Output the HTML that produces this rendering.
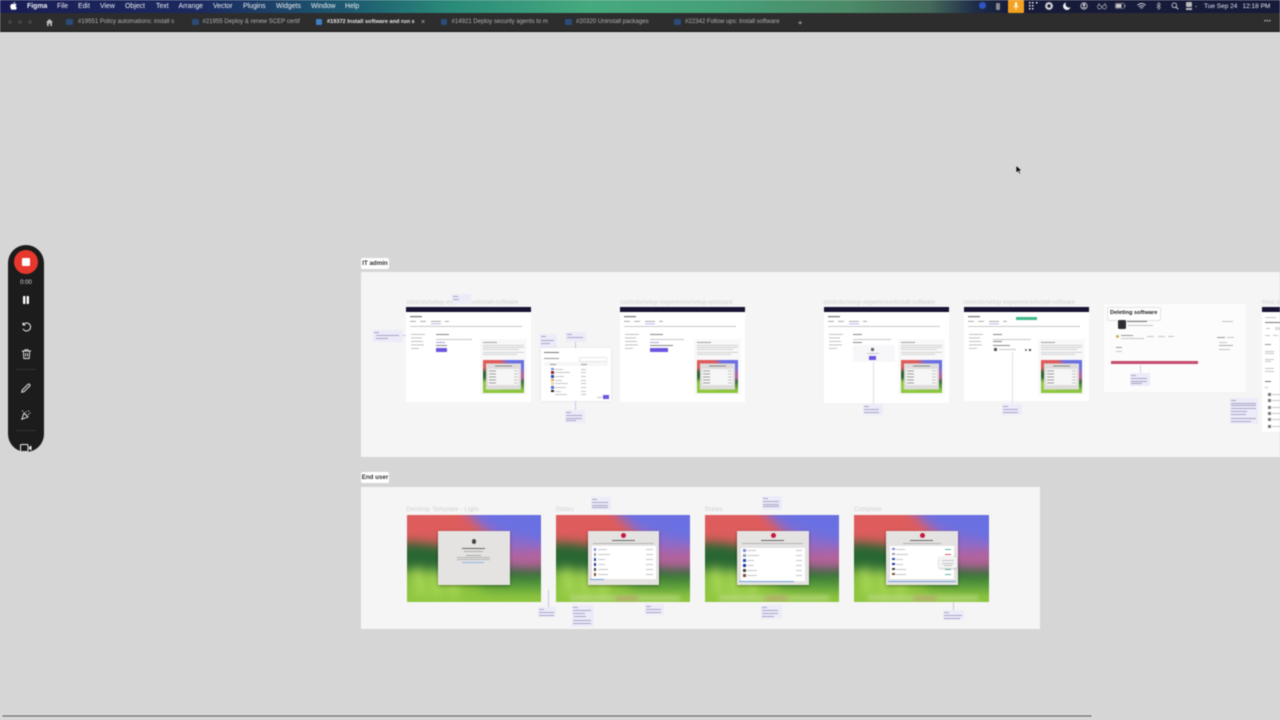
<!DOCTYPE html>
<html><head><meta charset="utf-8"><title>Figma</title>
<style>
html,body{margin:0;padding:0;width:1280px;height:720px;overflow:hidden;background:#d6d6d6;font-family:"Liberation Sans",sans-serif}
div,span,svg{position:absolute;display:block}
#all{left:0;top:0;width:1280px;height:720px;background:#d6d6d6;filter:blur(.45px);overflow:hidden}
.t{white-space:nowrap}
#menu{left:0;top:0;width:1280px;height:12.5px;background:linear-gradient(90deg,#1a1d55 0,#1b2a60 200px,#1d5a70 350px,#2a8a7a 450px,#46aa7e 590px,#45a078 720px,#4c8a68 850px,#44685a 930px,#1f2c48 975px,#171b3a 1010px,#171b3a 1280px)}
.m{top:3.1px;font-size:6.9px;line-height:8px;color:#eef0f4;white-space:nowrap;font-weight:400}
#tabs{left:0;top:12.5px;width:1280px;height:18.5px;background:#2d2d2d;border-bottom:1px solid #161616}
.tb{top:6.8px;font-size:6.05px;line-height:7px;color:#b0b2b5;white-space:nowrap}
.ic{top:6px;width:6.5px;height:6.5px;background:#2b4b78;border-radius:1px}
.lb{background:#fff;border-radius:2px;font-size:6.2px;line-height:11px;color:#333;font-weight:700;text-align:center}
.fr{background:#f5f5f5}
.h{font-size:6px;line-height:8px;color:#d0d0d0;white-space:nowrap;letter-spacing:.03px}
.card{background:#fff;width:125px;height:95px}
.bar{height:1px;background:#c6c6cc}
.hd{left:0;top:0;height:5px;width:125px;background:#191233}
.note{background:#ecebf8}
.note .bar{background:#a6a6c8;height:.8px}
.dlg{background:#e4e3e2;box-shadow:0 1px 3px rgba(0,0,0,.35)}
.row{background:#fff}
.wp{overflow:hidden;width:134.5px;height:87.5px;top:514.5px;background:#7db53a}
.ws{left:-20px;top:-20px;width:174.5px;height:127.5px;filter:blur(5.2px)}
.mw{left:77px;top:52.5px;width:41px;height:33px;overflow:hidden;background:#7db53a}
.ms{left:-6.1px;top:-7.5px;width:53.2px;height:48px;filter:blur(1.7px)}
.dock{left:14px;top:80px;width:110px;height:6px;background:#d9e6b0;opacity:.4;filter:blur(2.2px)}
.dock2{left:60px;top:81px;width:22px;height:5px;background:#b8956a;opacity:.6;filter:blur(2.2px)}
</style></head><body>
<svg width="0" height="0" style="left:0;top:0"><defs>
<g id="wps">
<rect x="-20" y="-20" width="175" height="128" fill="#84bc3c"/>
<rect x="-20" y="-20" width="175" height="70" fill="#6a70e2"/>
<path d="M45-20C65 0 90 25 155 28V55H70Z" fill="#8f6ac8"/>
<path d="M-20-20H46C62 4 84 24 110 42L90 48L-20 30Z" fill="#de5c5c"/>
<path d="M70 30C95 38 118 38 155 32V58H95Z" fill="#b4629a"/>
<path d="M-20 28C15 26 45 30 68 42C90 54 118 58 155 52V66H70C35 56 10 54-20 56Z" fill="#286632"/>
<path d="M60 58C95 64 125 64 155 62V78H80Z" fill="#55983a"/>
<path d="M-20 72C30 70 80 78 155 76V110H-20Z" fill="#8ec63f"/>
<path d="M6 54l5 26h7l-3-28zM24 54l3 28h7l-3-28zM42 58l2 24h7l-2-24z" fill="#b6e060"/>
</g>
<symbol id="mi" viewBox="0 0 41 33">
<rect x="3" y="3.500" width="35" height="26" fill="#dedcdb"/>
<rect x="5" y="9" width="31" height="16" fill="#f6f6f6"/>
<g fill="#888"><rect x="12" y="5.500" width="17" height="1"/><rect x="6" y="10.500" width="7" height=".8"/><rect x="6" y="13.500" width="7" height=".8"/><rect x="6" y="16.500" width="7" height=".8"/><rect x="6" y="19.500" width="7" height=".8"/><rect x="6" y="22.500" width="7" height=".8"/></g>
<g fill="#bbb"><rect x="31" y="10.500" width="4" height=".8"/><rect x="31" y="13.500" width="4" height=".8"/><rect x="31" y="16.500" width="4" height=".8"/><rect x="31" y="19.500" width="4" height=".8"/><rect x="31" y="22.500" width="4" height=".8"/></g>
</symbol>
<symbol id="cnt" viewBox="0 0 125 95">
<rect width="125" height="5" fill="#191233"/>
<g fill="#999"><rect x="4" y="9" width="12" height="1.200" fill="#777"/><rect x="4" y="14" width="6" height=".8"/><rect x="14" y="14" width="6" height=".8"/><rect x="25" y="14" width="10" height=".8"/><rect x="39" y="14" width="4" height=".8"/></g>
<rect x="25" y="16.500" width="10" height=".6" fill="#9a8fe0"/>
<rect x="4" y="19" width="112" height=".8" fill="#bbb"/>
<g fill="#b4b4b4"><rect x="5" y="27" width="14" height=".8"/><rect x="5" y="30.500" width="11" height=".8"/><rect x="5" y="34" width="12" height=".8"/><rect x="5" y="37.500" width="13" height=".8"/><rect x="5" y="41" width="8" height=".8"/></g>
<rect x="74" y="32" width="47" height="56" fill="#f8f8f8"/>
<g fill="#c0c0c0"><rect x="77" y="35" width="14" height=".9" fill="#999"/><rect x="77" y="38" width="41" height=".7"/><rect x="77" y="40" width="41" height=".7"/><rect x="77" y="42" width="36" height=".7"/><rect x="77" y="45" width="41" height=".7"/><rect x="77" y="47" width="34" height=".7"/></g>
</symbol>
</defs></svg>
<div id="all">

<!-- menu bar -->
<div id="menu">
<svg style="left:10px;top:2px" width="7" height="8" viewBox="0 0 14 16"><path fill="#fff" d="M10 0c.2 1.500-1.200 3.300-3 3.200C6.800 1.700 8.300.1 10 0zM7.100 4.200c.9 0 1.800-.7 3.200-.7 1 0 2.300.5 3 1.600-2.600 1.500-2.200 5.200.5 6.300-.7 1.800-2.200 4.400-3.700 4.400-1 0-1.500-.7-2.800-.7s-1.800.7-2.800.7C2.700 15.800.5 11.800.5 8.700c0-3 1.900-5 4-5 1.100 0 2 .5 2.600.5z"/></svg>
<div class="m" style="left:27px;font-weight:700">Figma</div>
<div class="m" style="left:57px">File</div>
<div class="m" style="left:78px">Edit</div>
<div class="m" style="left:100px">View</div>
<div class="m" style="left:125px">Object</div>
<div class="m" style="left:156px">Text</div>
<div class="m" style="left:178.500px">Arrange</div>
<div class="m" style="left:213px">Vector</div>
<div class="m" style="left:243px">Plugins</div>
<div class="m" style="left:276px">Widgets</div>
<div class="m" style="left:311px">Window</div>
<div class="m" style="left:345px">Help</div>
<div style="left:979px;top:2px;width:7px;height:7px;border-radius:50%;background:#2f55c8"></div>
<div style="left:996px;top:2.500px;width:3.500px;height:7px;background:#8a8d90;border-radius:1px"></div>
<div style="left:1008px;top:0;width:15.500px;height:12.500px;background:#f4a11f;border-radius:1px"></div>
<svg style="left:1012px;top:2px" width="8" height="9" viewBox="0 0 8 9"><rect x="3" y="0" width="2" height="5" rx="1" fill="#fff"/><path d="M1.800 3.500a2.200 2.200 0 004.400 0M4 6v2" stroke="#fff" stroke-width=".7" fill="none"/></svg>
<svg style="left:1029px;top:2px" width="9" height="8" viewBox="0 0 9 8" fill="#eee"><rect x="0" y="0" width="1.500" height="1.500"/><rect x="3" y="0" width="1.500" height="1.500"/><rect x="7" y="0" width="1.500" height="1.500"/><rect x="0" y="3" width="1.500" height="1.500"/><rect x="3" y="3" width="1.500" height="1.500"/><rect x="0" y="6" width="1.500" height="1.500"/><rect x="3" y="6" width="1.500" height="1.500"/></svg>
<svg style="left:1045px;top:2px" width="8" height="8" viewBox="0 0 8 8"><circle cx="4" cy="4" r="2.600" fill="none" stroke="#ddd" stroke-width="1.800"/><circle cx="4" cy="4" r="3.700" fill="none" stroke="#ddd" stroke-width=".8" stroke-dasharray="1 1"/></svg>
<svg style="left:1063px;top:2px" width="8" height="8" viewBox="0 0 8 8"><path d="M3 .5a3.800 3.800 0 104.500 4.800A3.500 3.500 0 013 .5z" fill="#eee"/></svg>
<svg style="left:1080px;top:2px" width="8" height="8" viewBox="0 0 8 8"><circle cx="4" cy="4" r="3.200" fill="none" stroke="#ddd" stroke-width=".8"/><circle cx="4" cy="3" r="1.300" fill="#ddd"/><path d="M1.800 6a2.500 2 0 014.400 0z" fill="#ddd"/></svg>
<svg style="left:1097px;top:2px" width="10" height="8" viewBox="0 0 10 8"><circle cx="2.500" cy="5" r="2" fill="none" stroke="#bbb" stroke-width=".7"/><circle cx="7.500" cy="5" r="2" fill="none" stroke="#bbb" stroke-width=".7"/><path d="M4.500 5h1M1 3l1.500-2M9 3L7.500 1" stroke="#bbb" stroke-width=".6"/></svg>
<svg style="left:1115px;top:3px" width="11" height="6" viewBox="0 0 11 6"><rect x=".3" y=".3" width="9" height="5.200" rx="1.200" fill="none" stroke="#999" stroke-width=".6"/><rect x="1" y="1" width="5.500" height="3.800" fill="#ccc"/><rect x="9.800" y="2" width=".8" height="2" fill="#999"/></svg>
<svg style="left:1137px;top:2.500px" width="9" height="7" viewBox="0 0 9 7"><path d="M.5 2.300a5.500 5.500 0 018 0M2 3.800a3.500 3.500 0 015 0M3.300 5.200a1.600 1.600 0 012.400 0" fill="none" stroke="#eee" stroke-width=".8"/></svg>
<svg style="left:1156px;top:2px" width="5" height="8" viewBox="0 0 5 8"><path d="M.5 2l4 3.500L2.500 7.500V.5l2 2-4 3.500" fill="none" stroke="#bbb" stroke-width=".6"/></svg>
<svg style="left:1171px;top:2px" width="8" height="8" viewBox="0 0 8 8"><circle cx="3.300" cy="3.300" r="2.300" fill="none" stroke="#ddd" stroke-width=".8"/><path d="M5 5l2.300 2.300" stroke="#ddd" stroke-width=".9"/></svg>
<div style="left:1186px;top:2px;width:6px;height:5px;background:#bbb;border-radius:1px"></div>
<div style="left:1186px;top:8px;width:6px;height:1.500px;background:#bbb"></div>
<div style="left:1195px;top:5.500px;width:1.500px;height:1.500px;background:#888;border-radius:50%"></div>
<div class="m" style="left:1204px;color:#e4e6ec;font-size:6.500px;top:2.500px">Tue Sep 24</div>
<div class="m" style="left:1242.500px;color:#e4e6ec;font-size:6.500px;top:2.500px">12:18 PM</div>
</div>

<!-- tab bar -->
<div id="tabs">
<div style="left:8px;top:7.500px;width:4px;height:4px;border-radius:50%;background:#444"></div>
<div style="left:18px;top:7.500px;width:4px;height:4px;border-radius:50%;background:#444"></div>
<div style="left:28px;top:7.500px;width:4px;height:4px;border-radius:50%;background:#444"></div>
<svg style="left:45.500px;top:6px" width="7" height="7" viewBox="0 0 7 7"><path d="M3.500 0L7 3.200H6V7H4.300V4.500H2.700V7H1V3.200H0z" fill="#bdbdbd"/></svg>
<div class="ic" style="left:66px"></div><div class="tb" style="left:78px">#19551 Policy automations: install s</div>
<div class="ic" style="left:192px"></div><div class="tb" style="left:202.500px">#21955 Deploy &amp; renew SCEP certif</div>
<div class="ic" style="left:315.500px;background:#3f7fc8"></div><div class="tb" style="left:327px;color:#e8e8e8;font-weight:700;font-size:5.600px;width:90px;overflow:hidden">#19372 Install software and run s</div>
<div class="tb" style="left:421px;color:#bbb;font-size:7px">×</div>
<div class="ic" style="left:440.500px"></div><div class="tb" style="left:451.500px">#14921 Deploy security agents to m</div>
<div class="ic" style="left:565px"></div><div class="tb" style="left:576px">#20320 Uninstall packages</div>
<div class="ic" style="left:674px"></div><div class="tb" style="left:685px">#22342 Follow ups: Install software</div>
<div class="tb" style="left:798px;color:#ccc;font-size:7.500px">+</div>
<div class="tb" style="left:1264px;color:#aaa;font-size:6px;letter-spacing:.3px">•••</div>
</div>

<!-- cursor -->
<svg style="left:1014.500px;top:165px" width="8" height="10" viewBox="0 0 8 10"><path d="M1 .5v7.500l2-1.800 1.400 3 1.200-.6-1.300-2.900H7z" fill="#111" stroke="#fff" stroke-width=".5"/></svg>

<!-- record toolbar -->
<div style="left:8px;top:245px;width:36px;height:207px;background:#1c1c1c;border-radius:18px;overflow:hidden">
<div style="left:6px;top:5px;width:24px;height:24px;border-radius:50%;background:#e8382e"></div>
<div style="left:14px;top:13px;width:8px;height:8px;background:#fff;border-radius:1px"></div>
<div class="t" style="left:0;width:36px;top:34px;text-align:center;font-size:6px;line-height:8px;color:#ddd">0:00</div>
<svg style="left:14px;top:51px" width="8" height="8" viewBox="0 0 8 8"><rect x="1" y="0" width="2.400" height="8" rx=".5" fill="#fff"/><rect x="4.600" y="0" width="2.400" height="8" rx=".5" fill="#fff"/></svg>
<svg style="left:13px;top:76px" width="10" height="11" viewBox="0 0 10 11"><path d="M2 1.500V4h2.500M2.200 3.800A4 4 0 112 7.800" fill="none" stroke="#e8e8e8" stroke-width="1"/></svg>
<svg style="left:13.500px;top:104px" width="9" height="10" viewBox="0 0 9 10"><path d="M0 2h9M3 2V.7h3V2M1.300 2l.5 7.500h5.400L7.700 2M3.500 4v3.500M5.500 4v3.500" fill="none" stroke="#e8e8e8" stroke-width=".9"/></svg>
<div style="left:8px;top:124px;width:20px;height:1px;background:#333"></div>
<svg style="left:13px;top:138px" width="10" height="10" viewBox="0 0 10 10"><path d="M.8 9.200L1.300 7 7 1.300a1 1 0 011.500 0l.2.200a1 1 0 010 1.500L3 8.700z" fill="none" stroke="#eee" stroke-width="1"/></svg>
<svg style="left:13px;top:165px" width="10" height="10" viewBox="0 0 10 10"><path d="M.8 9.200L3 3l4 4zM5 1.500v1M7 1h1M8.500 3h1M7 4.500h1M1 1h1" fill="none" stroke="#eee" stroke-width=".9"/></svg>
<div style="left:8px;top:185px;width:20px;height:1px;background:#333"></div>
<svg style="left:12px;top:199px" width="12" height="8" viewBox="0 0 12 8"><rect x=".5" y=".5" width="7.500" height="7" rx="1" fill="none" stroke="#eee" stroke-width="1"/><path d="M9 3l2.500-1.500v5L9 5z" fill="#eee"/></svg>
</div>

<!-- IT admin section -->
<div class="lb" style="left:361px;top:257.500px;width:28px;height:11px">IT admin</div>
<div class="fr" style="left:361px;top:272px;width:919px;height:185px"></div>

<div class="h" style="left:406.500px;top:298.500px">controls/setup-experience/install-software</div>
<div class="card" style="left:406px;top:307px"><svg width="125" height="95" style="left:0;top:0"><use href="#cnt"/></svg>
<div class="mw"><svg class="ms" viewBox="-20 -20 175 128" preserveAspectRatio="none"><use href="#wps"/></svg><svg style="left:0;top:0" width="41" height="33"><use href="#mi"/></svg></div>
<div class="bar" style="left:30px;top:27px;width:13px;background:#888"></div>
<div class="bar" style="left:30px;top:31.500px;width:36px"></div>
<div class="bar" style="left:30px;top:35px;width:9px;background:#a5a5e0"></div>
<div class="bar" style="left:30px;top:38px;width:11px;background:#888"></div>
<div style="left:30px;top:41px;width:11px;height:3.500px;background:#6a55e0;border-radius:.5px"></div>
</div>
<div class="h" style="left:620.500px;top:298.500px">controls/setup-experience/setup-assistant</div>
<div class="card" style="left:620px;top:307px"><svg width="125" height="95" style="left:0;top:0"><use href="#cnt"/></svg>
<div class="mw"><svg class="ms" viewBox="-20 -20 175 128" preserveAspectRatio="none"><use href="#wps"/></svg><svg style="left:0;top:0" width="41" height="33"><use href="#mi"/></svg></div>
<div class="bar" style="left:30px;top:27px;width:13px;background:#888"></div>
<div class="bar" style="left:30px;top:31.500px;width:34px"></div>
<div class="bar" style="left:30px;top:35px;width:9px;background:#a5a5e0"></div>
<div class="bar" style="left:30px;top:38px;width:23px;background:#888"></div>
<div style="left:30px;top:41px;width:18px;height:3.500px;background:#6a55e0;border-radius:.5px"></div>
</div>

<div class="note" style="left:373px;top:330px;width:29px;height:12px"><div class="bar" style="left:1px;top:2px;width:5px"></div><div class="bar" style="left:3px;top:5px;width:23px"></div><div class="bar" style="left:3px;top:8px;width:12px"></div></div>
<div class="bar" style="left:402px;top:335px;width:4px;background:#c9c9e6"></div>
<div class="note" style="left:452px;top:294px;width:19px;height:10px"><div class="bar" style="left:1px;top:2px;width:5px"></div><div class="bar" style="left:1px;top:5px;width:6px"></div></div>
<div class="note" style="left:540px;top:334px;width:17px;height:15px"><div class="bar" style="left:1px;top:2px;width:5px"></div><div class="bar" style="left:1px;top:6px;width:13px"></div><div class="bar" style="left:1px;top:9px;width:9px"></div></div>
<div class="note" style="left:566px;top:332px;width:20px;height:10px"><div class="bar" style="left:1px;top:2px;width:5px"></div><div class="bar" style="left:1px;top:5px;width:16px"></div></div>
<div class="bar" style="left:575px;top:342px;width:.8px;height:6px;background:#c9c9e6"></div>

<div style="left:541px;top:348px;width:70px;height:53px;background:#fff;box-shadow:0 0 3px rgba(0,0,0,.08);overflow:hidden">
<div class="bar" style="left:3px;top:4px;width:15px;background:#777"></div>
<div class="bar" style="left:3px;top:10px;width:15px;background:#999"></div>
<div style="left:38px;top:9px;width:26px;height:3px;border:.5px solid #e6e6e6"></div>
<div style="left:3px;top:14px;width:64px;height:4px;background:#f6f6f6"></div>
<div class="bar" style="left:9px;top:15.500px;width:6px;background:#999"></div><div class="bar" style="left:40px;top:15.500px;width:6px;background:#999"></div>
<div style="left:10px;top:19.500px;width:2.500px;height:2.500px;background:#7d8ae0"></div><div class="bar" style="left:14px;top:20.500px;width:8px"></div><div class="bar" style="left:40px;top:20.500px;width:5px"></div>
<div style="left:10px;top:23px;width:2.500px;height:2.500px;background:#8c2a2a"></div><div class="bar" style="left:14px;top:24px;width:15px"></div><div class="bar" style="left:40px;top:24px;width:5px"></div>
<div style="left:10px;top:27px;width:2.500px;height:2.500px;background:#2a4ab0"></div><div class="bar" style="left:14px;top:28px;width:9px"></div><div class="bar" style="left:40px;top:28px;width:5px"></div>
<div style="left:10px;top:30.500px;width:2.500px;height:2.500px;background:#e0a040"></div><div class="bar" style="left:14px;top:31.500px;width:7px"></div><div class="bar" style="left:40px;top:31.500px;width:5px"></div>
<div style="left:10px;top:34px;width:2.500px;height:2.500px;background:#e8d8a0"></div><div class="bar" style="left:14px;top:35px;width:13px"></div><div class="bar" style="left:40px;top:35px;width:5px"></div>
<div style="left:10px;top:38px;width:2.500px;height:2.500px;background:#5a6ad0"></div><div class="bar" style="left:14px;top:39px;width:11px"></div><div class="bar" style="left:40px;top:39px;width:5px"></div>
<div style="left:10px;top:41.500px;width:2.500px;height:2.500px;background:#222"></div><div class="bar" style="left:14px;top:42.500px;width:6px"></div><div class="bar" style="left:40px;top:42.500px;width:5px"></div>
<div class="bar" style="left:14px;top:46px;width:12px"></div><div class="bar" style="left:40px;top:46px;width:5px"></div>
<div class="bar" style="left:56px;top:49px;width:5px"></div>
<div style="left:62px;top:47px;width:6px;height:3.500px;background:#6a55e0"></div>
</div>
<div class="bar" style="left:575px;top:401px;width:.8px;height:10px;background:#c9c9e6"></div>
<div class="note" style="left:565px;top:410px;width:20px;height:13px"><div class="bar" style="left:1px;top:2px;width:5px"></div><div class="bar" style="left:1px;top:5px;width:16px"></div><div class="bar" style="left:1px;top:7.500px;width:16px"></div><div class="bar" style="left:1px;top:10px;width:10px"></div></div>

<div class="h" style="left:823.500px;top:298.500px">controls/setup-experience/install-software</div>
<div class="card" style="left:823.500px;top:307px;height:96px"><svg width="125" height="95" style="left:0;top:0"><use href="#cnt"/></svg>
<div class="mw"><svg class="ms" viewBox="-20 -20 175 128" preserveAspectRatio="none"><use href="#wps"/></svg><svg style="left:0;top:0" width="41" height="33"><use href="#mi"/></svg></div>
<div class="bar" style="left:29px;top:27px;width:9px;background:#888"></div>
<div class="bar" style="left:29px;top:31.500px;width:38px"></div>
<div class="bar" style="left:29px;top:35px;width:9px;background:#888"></div>
<div style="left:29px;top:38px;width:42px;height:17px;background:#f7f7fa"></div>
<div style="left:47px;top:41px;width:3px;height:3px;background:#666"></div>
<div class="bar" style="left:43px;top:46px;width:12px"></div>
<div style="left:45.500px;top:49px;width:7px;height:3.500px;background:#6a55e0"></div>
</div>
<div class="bar" style="left:873px;top:362px;width:.8px;height:42px;background:#dedeee"></div>
<div class="note" style="left:863px;top:404px;width:20px;height:11px"><div class="bar" style="left:1px;top:2px;width:5px"></div><div class="bar" style="left:1px;top:5px;width:15px"></div><div class="bar" style="left:1px;top:8px;width:15px"></div></div>

<div class="h" style="left:963.500px;top:298.500px">controls/setup-experience/install-software</div>
<div class="card" style="left:963.500px;top:307px;height:94px"><svg width="125" height="95" style="left:0;top:0"><use href="#cnt"/></svg>
<div class="mw"><svg class="ms" viewBox="-20 -20 175 128" preserveAspectRatio="none"><use href="#wps"/></svg><svg style="left:0;top:0" width="41" height="33"><use href="#mi"/></svg></div>
<div style="left:52.500px;top:9.500px;width:21px;height:3.500px;background:#3fb98a;border-radius:.5px"></div>
<div class="bar" style="left:29px;top:27px;width:9px;background:#888"></div>
<div class="bar" style="left:29px;top:31.500px;width:38px"></div>
<div class="bar" style="left:29px;top:34px;width:9px;background:#888"></div>
<div class="bar" style="left:29px;top:38px;width:17px;background:#888"></div>
<div style="left:30px;top:41px;width:3px;height:3px;background:#555"></div>
<div class="bar" style="left:35px;top:41.500px;width:17px"></div>
<div style="left:61px;top:41.500px;width:2px;height:2px;background:#888"></div><div style="left:65px;top:41.500px;width:2px;height:2px;background:#444"></div>
</div>
<div class="bar" style="left:1012px;top:352px;width:.8px;height:52px;background:#dedeee"></div>
<div class="note" style="left:1002px;top:404px;width:20px;height:11px"><div class="bar" style="left:1px;top:2px;width:5px"></div><div class="bar" style="left:1px;top:5px;width:15px"></div><div class="bar" style="left:1px;top:8px;width:15px"></div></div>

<div style="left:1104px;top:304px;width:142px;height:88px;background:#fcfcfc"></div>
<div style="left:1107px;top:307px;width:52px;height:11.500px;background:#fff;border:.5px solid #e2e2e2;border-radius:2px"></div>
<div class="t" style="left:1110px;top:308.500px;font-size:5.700px;line-height:8px;font-weight:700;color:#222">Deleting software</div>
<div style="left:1117.500px;top:320px;width:8.500px;height:8.500px;background:#2e2e34;border-radius:1.500px"></div>
<div class="bar" style="left:1127px;top:321px;width:20px;background:#777"></div>
<div class="bar" style="left:1128px;top:325px;width:25px"></div>
<div class="bar" style="left:1222px;top:321px;width:11px"></div>
<div style="left:1116px;top:335px;width:3px;height:3px;background:#c9b24a;border-radius:50%"></div>
<div class="bar" style="left:1121px;top:335px;width:12px;background:#999"></div>
<div class="bar" style="left:1121px;top:338px;width:23px"></div>
<div class="bar" style="left:1147px;top:336px;width:7px"></div><div class="bar" style="left:1158px;top:336px;width:7px"></div><div class="bar" style="left:1168px;top:336px;width:6px"></div>
<div class="bar" style="left:1217px;top:337px;width:8px;background:#999"></div><div class="bar" style="left:1227px;top:337px;width:7px"></div>
<div class="bar" style="left:1219px;top:342px;width:8px"></div>
<div class="bar" style="left:1219px;top:345px;width:14px;background:#aaa"></div>
<div class="bar" style="left:1219px;top:349px;width:11px"></div>
<div class="bar" style="left:1116px;top:347px;width:6px;background:#999"></div>
<div class="bar" style="left:1116px;top:351px;width:6px"></div>
<div style="left:1111px;top:361px;width:87px;height:3px;background:#c64c6e"></div>
<div class="bar" style="left:1140px;top:365px;width:.8px;height:8px;background:#d5d5ea"></div>
<div class="note" style="left:1130px;top:373px;width:20px;height:13px"><div class="bar" style="left:1px;top:2px;width:5px"></div><div class="bar" style="left:1px;top:5px;width:16px"></div><div class="bar" style="left:1px;top:7.500px;width:16px"></div><div class="bar" style="left:1px;top:10px;width:11px"></div></div>
<div class="note" style="left:1230px;top:398px;width:28px;height:26px"><div class="bar" style="left:1px;top:2px;width:5px"></div><div class="bar" style="left:1px;top:5px;width:25px"></div><div class="bar" style="left:1px;top:7px;width:25px"></div><div class="bar" style="left:1px;top:10px;width:25px"></div><div class="bar" style="left:1px;top:13px;width:16px"></div><div class="bar" style="left:1px;top:16px;width:15px"></div><div class="bar" style="left:1px;top:20px;width:25px"></div><div class="bar" style="left:1px;top:23px;width:20px"></div></div>
<div class="h" style="left:1262px;top:298.500px">Host details</div>
<div class="card" style="left:1262px;top:307px;width:18px;height:125px">
<div class="hd" style="width:18px"></div>
<div class="bar" style="left:3px;top:9.500px;width:11px"></div>
<div class="bar" style="left:3px;top:15px;width:15px;background:#777"></div>
<div class="bar" style="left:4px;top:21px;width:4px"></div><div style="left:13px;top:20px;width:5px;height:3px;background:#ddd"></div>
<div class="bar" style="left:3px;top:28px;width:5px"></div><div class="bar" style="left:11px;top:28px;width:5px"></div>
<div class="bar" style="left:3px;top:37px;width:6px;background:#999"></div>
<div class="bar" style="left:3px;top:44px;width:9px"></div><div class="bar" style="left:3px;top:46px;width:9px"></div>
<div class="bar" style="left:3px;top:52px;width:9px"></div><div class="bar" style="left:3px;top:54px;width:6px"></div>
<div class="bar" style="left:3px;top:61px;width:9px"></div><div class="bar" style="left:3px;top:64px;width:9px"></div>
<div class="bar" style="left:3px;top:74px;width:6px;background:#777"></div>
<div class="bar" style="left:3px;top:80px;width:3px"></div>
<div style="left:6px;top:85.500px;width:2.500px;height:3px;background:#777"></div><div class="bar" style="left:10px;top:86.500px;width:8px"></div>
<div style="left:6px;top:92px;width:2.500px;height:3px;background:#777"></div><div class="bar" style="left:10px;top:93px;width:8px"></div>
<div style="left:6px;top:98.500px;width:2.500px;height:3px;background:#777"></div><div class="bar" style="left:10px;top:99.500px;width:8px"></div>
<div style="left:6px;top:105px;width:2.500px;height:3px;background:#777"></div><div class="bar" style="left:10px;top:106px;width:8px"></div>
<div style="left:6px;top:111px;width:2.500px;height:3px;background:#777"></div><div class="bar" style="left:10px;top:112px;width:8px"></div>
<div style="left:6px;top:117.500px;width:2.500px;height:3px;background:#777"></div><div class="bar" style="left:10px;top:118.500px;width:8px"></div>
</div>

<!-- End user section -->
<div class="lb" style="left:361px;top:472px;width:28px;height:11px">End user</div>
<div class="fr" style="left:361px;top:487px;width:679px;height:142px"></div>

<div class="h" style="left:406.500px;top:505.500px;letter-spacing:.25px">Desktop Template - Light</div>
<div class="h" style="left:555.500px;top:505.500px;letter-spacing:.25px">States</div>
<div class="h" style="left:704.500px;top:505.500px;letter-spacing:.25px">States</div>
<div class="h" style="left:854px;top:505.500px;letter-spacing:.25px">Complete</div>

<div class="wp" style="left:406.500px"><svg class="ws" viewBox="-20 -20 175 128" preserveAspectRatio="none"><use href="#wps"/></svg></div>
<div class="wp" style="left:555.500px"><svg class="ws" viewBox="-20 -20 175 128" preserveAspectRatio="none"><use href="#wps"/></svg><div class="dock"></div><div class="dock2"></div></div>
<div class="wp" style="left:704.500px"><svg class="ws" viewBox="-20 -20 175 128" preserveAspectRatio="none"><use href="#wps"/></svg><div class="dock"></div><div class="dock2"></div></div>
<div class="wp" style="left:854px"><svg class="ws" viewBox="-20 -20 175 128" preserveAspectRatio="none"><use href="#wps"/></svg><div class="dock"></div><div class="dock2"></div></div>

<!-- dialog 1 -->
<div class="dlg" style="left:438px;top:531px;width:71.500px;height:54px">
<div style="left:33.500px;top:8px;width:4.500px;height:5px;background:#444;border-radius:50%"></div>
<div class="bar" style="left:24px;top:16.500px;width:23px;height:1.200px;background:#666"></div>
<div class="bar" style="left:26px;top:20px;width:19px;background:#aaa"></div>
<div class="bar" style="left:28px;top:23.500px;width:15px;background:#aaa"></div>
<div class="bar" style="left:19px;top:26px;width:33px;background:#b4b4b4"></div>
<div class="bar" style="left:19px;top:28px;width:33px;background:#b4b4b4"></div>
<div class="bar" style="left:24px;top:31px;width:22px;background:#8fb4e6"></div>
</div>

<!-- dialog 2 / 3 / 4 -->
<div class="dlg" style="left:587.500px;top:531px;width:71.500px;height:54px">
<div style="left:33.500px;top:2px;width:5px;height:5px;background:#c9183c;border-radius:50%"></div>
<div class="bar" style="left:24px;top:8.500px;width:23px;height:1.200px;background:#666"></div>
<div class="bar" style="left:5px;top:11.500px;width:61px;background:#b4b4b4"></div>
<div class="row" style="left:4px;top:15px;width:64px;height:33px"></div>
<div style="left:6px;top:17px;width:2.500px;height:2.500px;background:#7d8ae0"></div><div class="bar" style="left:10px;top:18px;width:9px"></div><div class="bar" style="left:58px;top:18px;width:7px"></div>
<div style="left:6px;top:22px;width:2.500px;height:2.500px;background:#9a9ab5"></div><div class="bar" style="left:10px;top:23px;width:12px"></div><div class="bar" style="left:58px;top:23px;width:7px"></div>
<div style="left:6px;top:27px;width:2.500px;height:2.500px;background:#2a4ab0"></div><div class="bar" style="left:10px;top:28px;width:7px"></div><div class="bar" style="left:58px;top:28px;width:7px"></div>
<div style="left:6px;top:32px;width:2.500px;height:2.500px;background:#23329c"></div><div class="bar" style="left:10px;top:33px;width:7px"></div><div class="bar" style="left:58px;top:33px;width:7px"></div>
<div style="left:6px;top:37px;width:2.500px;height:2.500px;background:#444"></div><div class="bar" style="left:10px;top:38px;width:10px"></div><div class="bar" style="left:58px;top:38px;width:7px"></div>
<div style="left:6px;top:42px;width:2.500px;height:2.500px;background:#7a4a3a"></div><div class="bar" style="left:10px;top:43px;width:10px"></div><div class="bar" style="left:58px;top:43px;width:7px"></div>
<div class="bar" style="left:2px;top:48px;width:14px;background:#6ea3e0"></div>
</div>
<div class="dlg" style="left:737px;top:531px;width:71.500px;height:54px">
<div style="left:33.500px;top:2px;width:5px;height:5px;background:#c9183c;border-radius:50%"></div>
<div class="bar" style="left:24px;top:8.500px;width:23px;height:1.200px;background:#666"></div>
<div class="bar" style="left:5px;top:11.500px;width:61px;background:#b4b4b4"></div>
<div class="row" style="left:4px;top:16.500px;width:64px;height:33px"></div>
<div style="left:6px;top:18px;width:2.500px;height:2.500px;background:#7d8ae0"></div><div class="bar" style="left:10px;top:19px;width:9px"></div><div class="bar" style="left:59px;top:19px;width:6px"></div>
<div style="left:6px;top:23px;width:2.500px;height:2.500px;background:#9a9ab5"></div><div class="bar" style="left:10px;top:24px;width:12px"></div><div class="bar" style="left:59px;top:24px;width:6px"></div>
<div style="left:6px;top:28px;width:2.500px;height:2.500px;background:#2a4ab0"></div><div class="bar" style="left:10px;top:29px;width:7px"></div><div class="bar" style="left:59px;top:29px;width:6px"></div>
<div style="left:6px;top:33px;width:2.500px;height:2.500px;background:#23329c"></div><div class="bar" style="left:10px;top:34px;width:7px"></div><div class="bar" style="left:59px;top:34px;width:6px"></div>
<div style="left:6px;top:38px;width:2.500px;height:2.500px;background:#444"></div><div class="bar" style="left:10px;top:39px;width:10px"></div><div class="bar" style="left:59px;top:39px;width:6px"></div>
<div style="left:6px;top:43px;width:2.500px;height:2.500px;background:#7a4a3a"></div><div class="bar" style="left:10px;top:44px;width:10px"></div><div class="bar" style="left:59px;top:44px;width:6px"></div>
<div style="left:2px;top:49.500px;width:55px;height:1.200px;background:#6ea3e0"></div>
</div>
<div class="dlg" style="left:886px;top:531px;width:71.500px;height:54px">
<div style="left:33.500px;top:2px;width:5px;height:5px;background:#c9183c;border-radius:50%"></div>
<div class="bar" style="left:24px;top:8.500px;width:23px;height:1.200px;background:#666"></div>
<div class="bar" style="left:17px;top:11.500px;width:38px;background:#b4b4b4"></div>
<div class="row" style="left:4px;top:15px;width:64px;height:33px"></div>
<div style="left:6px;top:16.500px;width:2.500px;height:2.500px;background:#7d8ae0"></div><div class="bar" style="left:10px;top:17.500px;width:9px"></div><div class="bar" style="left:59px;top:17.500px;width:6px;background:#62b89c"></div>
<div style="left:6px;top:21.500px;width:2.500px;height:2.500px;background:#9a9ab5"></div><div class="bar" style="left:10px;top:22.500px;width:12px"></div><div class="bar" style="left:59px;top:22.500px;width:6px;background:#d05a70"></div>
<div style="left:6px;top:26.500px;width:2.500px;height:2.500px;background:#2a4ab0"></div><div class="bar" style="left:10px;top:27.500px;width:7px"></div>
<div style="left:6px;top:31.500px;width:2.500px;height:2.500px;background:#23329c"></div><div class="bar" style="left:10px;top:32.500px;width:7px"></div>
<div style="left:6px;top:36.500px;width:2.500px;height:2.500px;background:#444"></div><div class="bar" style="left:10px;top:37.500px;width:10px"></div><div class="bar" style="left:59px;top:37.500px;width:6px;background:#62b89c"></div>
<div style="left:6px;top:41.500px;width:2.500px;height:2.500px;background:#7a4a3a"></div><div class="bar" style="left:10px;top:42.500px;width:10px"></div><div class="bar" style="left:59px;top:42.500px;width:6px;background:#62b89c"></div>
<div style="left:2px;top:49.500px;width:68px;height:1.200px;background:#6ea3e0"></div>
<div style="left:53px;top:26px;width:18px;height:11px;background:#f4f4f4;border-radius:1.500px;box-shadow:0 .5px 2px rgba(0,0,0,.3)"><div class="bar" style="left:3px;top:3px;width:12px"></div><div class="bar" style="left:3px;top:5.500px;width:12px"></div><div class="bar" style="left:5px;top:8px;width:8px"></div></div>
</div>

<!-- end-user notes -->
<div class="note" style="left:591px;top:497px;width:20px;height:13px"><div class="bar" style="left:1px;top:2px;width:5px"></div><div class="bar" style="left:1px;top:5px;width:16px"></div><div class="bar" style="left:1px;top:7.500px;width:16px"></div><div class="bar" style="left:1px;top:10px;width:16px"></div></div>
<div class="note" style="left:762px;top:496px;width:20px;height:14px"><div class="bar" style="left:1px;top:2px;width:5px"></div><div class="bar" style="left:1px;top:5px;width:16px"></div><div class="bar" style="left:1px;top:7.500px;width:16px"></div><div class="bar" style="left:1px;top:10px;width:16px"></div></div>
<div class="bar" style="left:548px;top:590px;width:.8px;height:17px;background:#c9c9dc"></div>
<div class="note" style="left:538px;top:607px;width:18px;height:10px"><div class="bar" style="left:1px;top:2px;width:5px"></div><div class="bar" style="left:1px;top:5px;width:15px"></div><div class="bar" style="left:1px;top:7.500px;width:15px"></div></div>
<div class="note" style="left:572px;top:605px;width:22px;height:22px"><div class="bar" style="left:1px;top:2px;width:5px"></div><div class="bar" style="left:1px;top:5px;width:18px"></div><div class="bar" style="left:1px;top:8px;width:12px"></div><div class="bar" style="left:2px;top:11px;width:12px"></div><div class="bar" style="left:1px;top:15px;width:18px"></div><div class="bar" style="left:1px;top:18px;width:18px"></div></div>
<div class="note" style="left:645px;top:604px;width:19px;height:11px"><div class="bar" style="left:1px;top:2px;width:5px"></div><div class="bar" style="left:1px;top:5px;width:15px"></div><div class="bar" style="left:1px;top:8px;width:15px"></div></div>
<div class="note" style="left:761px;top:605px;width:21px;height:14px"><div class="bar" style="left:1px;top:2px;width:5px"></div><div class="bar" style="left:1px;top:5px;width:16px"></div><div class="bar" style="left:1px;top:8px;width:16px"></div><div class="bar" style="left:1px;top:11px;width:12px"></div></div>
<div class="bar" style="left:953px;top:602px;width:.8px;height:10px;background:#c9c9dc"></div>
<div class="note" style="left:943px;top:610px;width:21px;height:10px"><div class="bar" style="left:1px;top:2px;width:5px"></div><div class="bar" style="left:1px;top:5px;width:18px"></div><div class="bar" style="left:1px;top:7.500px;width:16px"></div></div>

<!-- scrollbar -->
<div style="left:1px;top:714px;width:1092px;height:3.500px;background:#e6e6e6;border-radius:2px"></div>
<div style="left:2px;top:715px;width:1090px;height:2px;background:#8a8a8a;border-radius:1px"></div>
</div>
</body></html>
